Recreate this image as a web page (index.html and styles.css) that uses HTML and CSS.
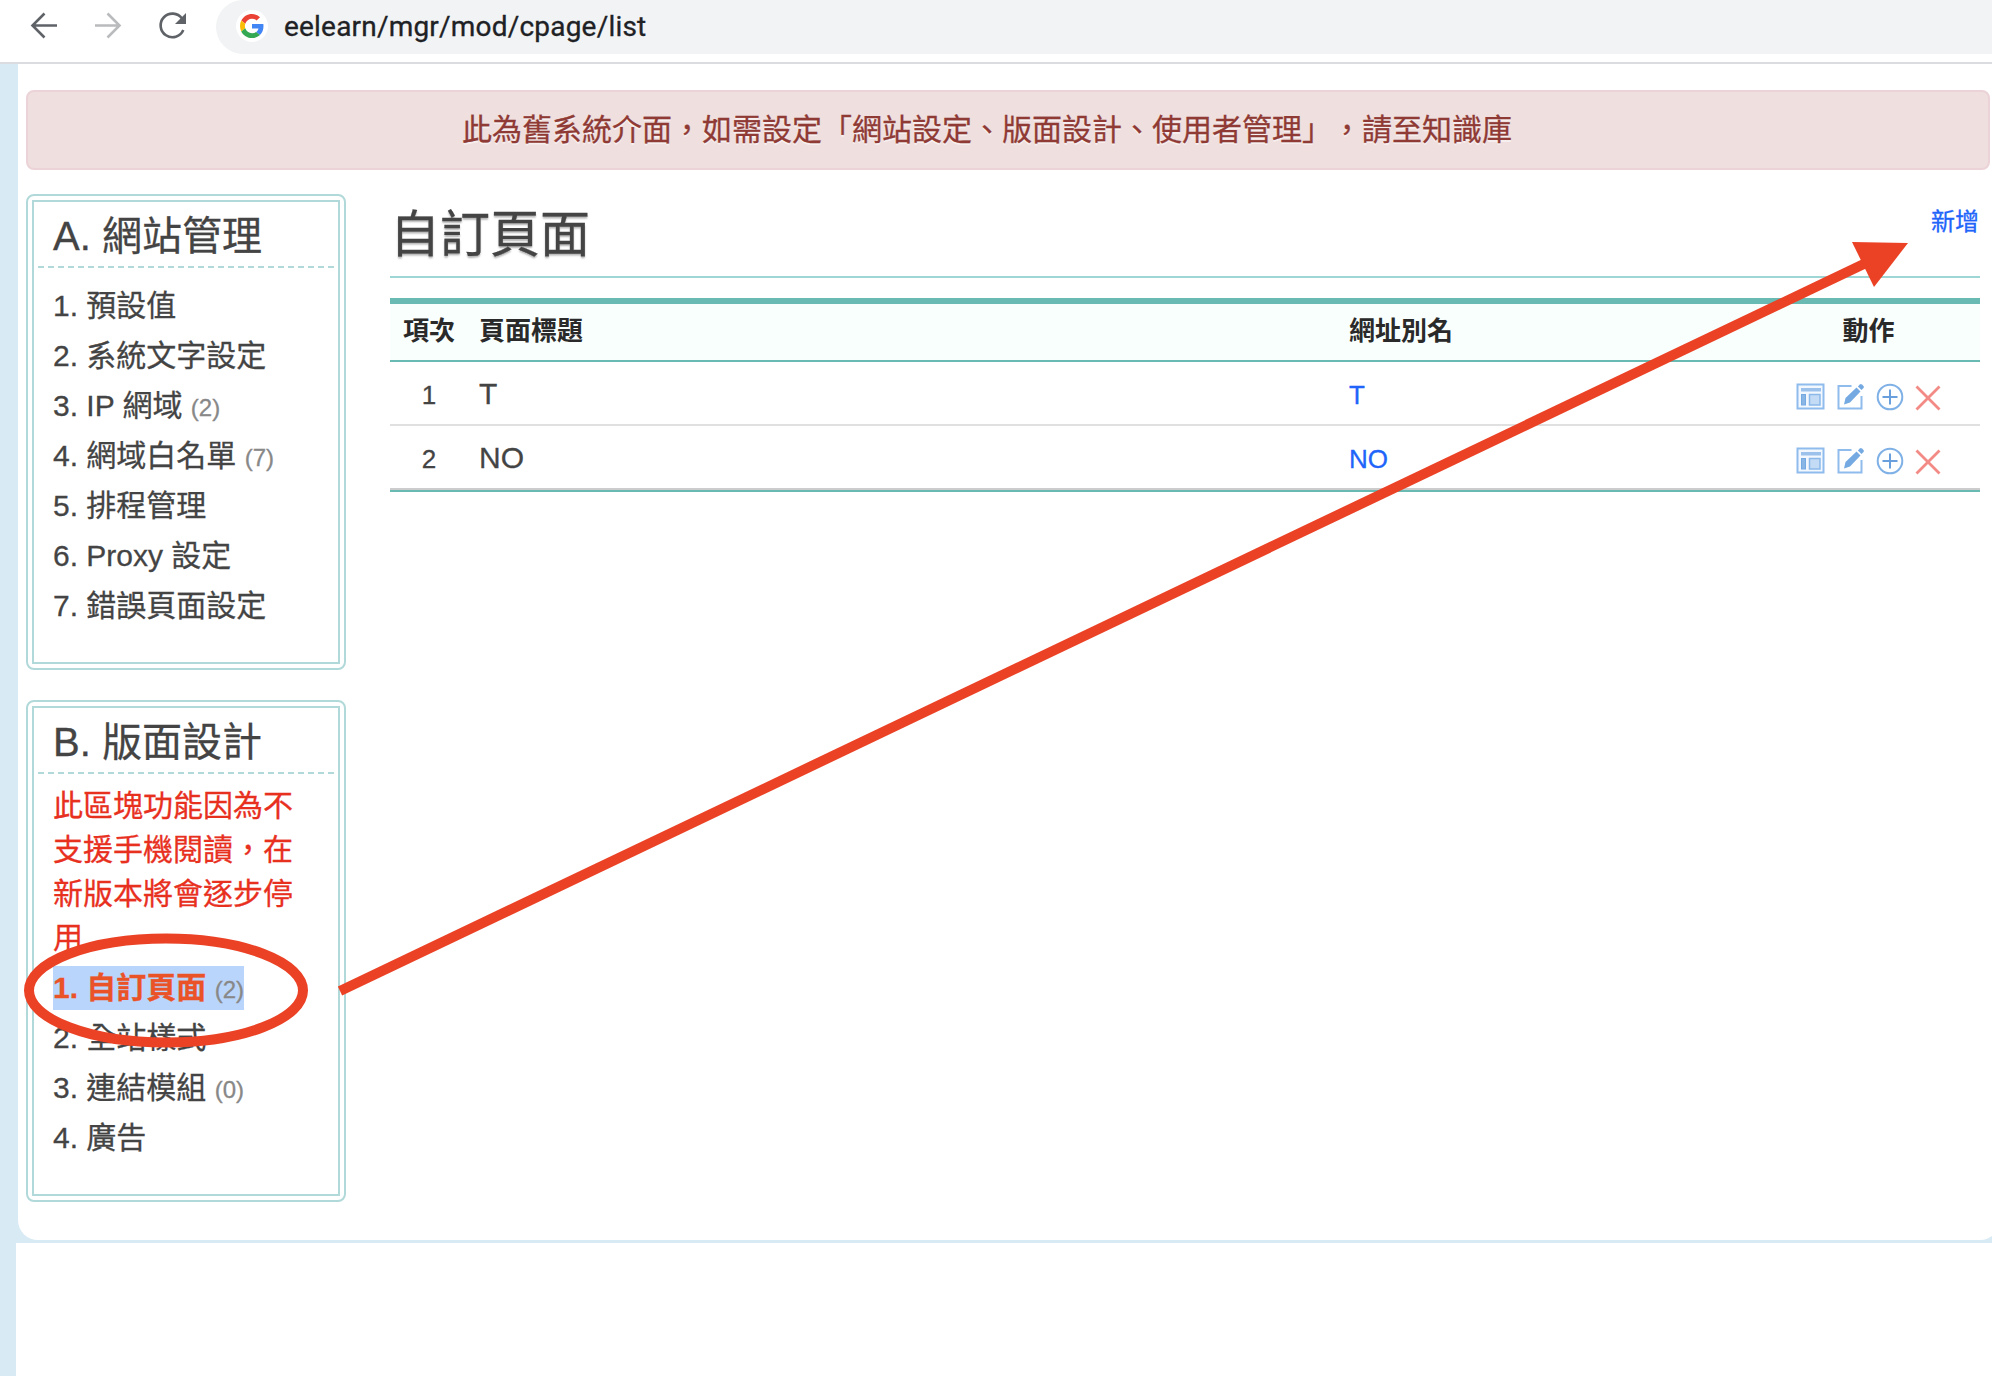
FILE: index.html
```
<!DOCTYPE html>
<html lang="zh-Hant">
<head>
  <meta charset="UTF-8" />
  <title>自訂頁面</title>
  <link rel="stylesheet" href="styles.css">
</head>
<body>
  <svg class="sprite">
    <symbol id="i-layout" viewBox="0 0 30 28">
      <rect x="1.5" y="1.5" width="26" height="24" fill="#f3f8fe" stroke="#8fbcec" stroke-width="2"/>
      <rect x="5" y="5" width="20" height="3.5" fill="#9cc2ec"/>
      <rect x="5.5" y="11.5" width="4" height="10.5" fill="#8ab6e6" stroke="#74a9e2"/>
      <rect x="13.5" y="11.5" width="10.5" height="10.5" fill="#c3dbf4" stroke="#8cb9ea" stroke-width="1.5"/>
    </symbol>
    <symbol id="i-edit" viewBox="0 0 30 28">
      <path d="M15.500 3H2.500v22.500h23V13" fill="none" stroke="#8fbcec" stroke-width="2"/>
      <path d="M8 21.500l1.500-6.500L20.500 4.500l4 4L14 19.500z" fill="#74a9e2"/>
      <path d="M21.900 3.400l2-2a1.500 1.500 0 0 1 2 0l1.600 1.600a1.500 1.500 0 0 1 0 2l-2 2z" fill="#74a9e2"/>
    </symbol>
    <symbol id="i-plus" viewBox="0 0 28 28">
      <circle cx="14" cy="14" r="12.300" fill="none" stroke="#7fb0e6" stroke-width="2"/>
      <path d="M14 6.500v15M6.500 14h15" stroke="#6a9fdd" stroke-width="2"/>
    </symbol>
    <symbol id="i-del" viewBox="0 0 26 26">
      <path d="M1.500 1.500l23 23M24.500 1.500l-23 23" stroke="#f28b85" stroke-width="2.800"/>
    </symbol>
  </svg>

  <div class="toolbar">
    <svg class="nav" viewBox="0 0 216 62">
      <g fill="none" stroke="#5f6368" stroke-width="2.600">
        <path d="M57 25.500H33M44.500 13.500l-12 12 12 12"/>
        <path d="M95 25.500h24M107.500 13.500l12 12-12 12" stroke="#b9bbbd"/>
        <path d="M182 18.500a11.800 11.800 0 1 0 1.300 11.500"/>
      </g>
      <path d="M186 13v11h-11z" fill="#5f6368"/>
    </svg>
    <div class="address">
      <div class="favicon">
        <svg viewBox="0 0 48 48" width="24" height="24">
          <path fill="#ea4335" d="M24 9.500c3.540 0 6.710 1.220 9.210 3.600l6.850-6.850C35.900 2.380 30.470 0 24 0 14.620 0 6.510 5.380 2.560 13.220l7.980 6.190C12.430 13.720 17.740 9.500 24 9.500z"/>
          <path fill="#4285f4" d="M46.980 24.550c0-1.570-.15-3.090-.38-4.550H24v9.020h12.940c-.58 2.960-2.260 5.480-4.780 7.180l7.730 6c4.510-4.180 7.090-10.360 7.090-17.650z"/>
          <path fill="#fbbc05" d="M10.530 28.590c-.48-1.450-.76-2.990-.76-4.590s.27-3.140.76-4.590l-7.980-6.190C.92 16.460 0 20.120 0 24s.92 7.540 2.560 10.780z"/>
          <path fill="#34a853" d="M24 48c6.480 0 11.930-2.130 15.890-5.810l-7.730-6c-2.150 1.450-4.920 2.300-8.160 2.300-6.260 0-11.570-4.220-13.470-9.910l-7.980 6.190C6.510 42.620 14.620 48 24 48z"/>
        </svg>
      </div>
      <span class="url">eelearn/mgr/mod/cpage/list</span>
    </div>
  </div>

  <div class="page">
    <div class="wrap">
      <div class="alert">此為舊系統介面，如需設定「網站設定、版面設計、使用者管理」，請至知識庫</div>
      <div class="cols">
        <div class="side">
          <div class="box">
            <div class="box-in">
              <h2>A. 網站管理</h2>
              <ul>
                <li>1. 預設值</li>
                <li>2. 系統文字設定</li>
                <li>3. IP 網域 <small>(2)</small></li>
                <li>4. 網域白名單 <small>(7)</small></li>
                <li>5. 排程管理</li>
                <li>6. Proxy 設定</li>
                <li>7. 錯誤頁面設定</li>
              </ul>
            </div>
          </div>
          <div class="box box-b">
            <div class="box-in">
              <h2>B. 版面設計</h2>
              <p class="warn">此區塊功能因為不支援手機閱讀，在新版本將會逐步停用</p>
              <ul>
                <li><span class="selected"><b>1. 自訂頁面</b> <small>(2)</small></span></li>
                <li>2. 全站樣式</li>
                <li>3. 連結模組 <small>(0)</small></li>
                <li>4. 廣告</li>
              </ul>
            </div>
          </div>
        </div>

        <div class="main">
          <div class="main-head">
            <h1>自訂頁面</h1>
            <a class="add">新增</a>
          </div>
          <table>
            <thead>
              <tr><th class="no">項次</th><th class="name">頁面標題</th><th class="alias">網址別名</th><th class="act">動作</th></tr>
            </thead>
            <tbody>
              <tr>
                <td class="no">1</td>
                <td class="name">T</td>
                <td class="alias"><a>T</a></td>
                <td class="act">
                  <div class="icons">
                    <svg width="30" height="28"><use href="#i-layout"/></svg>
                    <svg width="30" height="28"><use href="#i-edit"/></svg>
                    <svg width="28" height="28"><use href="#i-plus"/></svg>
                    <svg class="del" width="26" height="26"><use href="#i-del"/></svg>
                  </div>
                </td>
              </tr>
              <tr>
                <td class="no">2</td>
                <td class="name">NO</td>
                <td class="alias"><a>NO</a></td>
                <td class="act">
                  <div class="icons">
                    <svg width="30" height="28"><use href="#i-layout"/></svg>
                    <svg width="30" height="28"><use href="#i-edit"/></svg>
                    <svg width="28" height="28"><use href="#i-plus"/></svg>
                    <svg class="del" width="26" height="26"><use href="#i-del"/></svg>
                  </div>
                </td>
              </tr>
            </tbody>
          </table>
        </div>
      </div>
    </div>
  </div>
  <div class="below"></div>

  <!-- hand-drawn marks -->
  <svg class="marks" viewBox="0 0 1992 1376">
    <ellipse cx="166" cy="990.500" rx="137" ry="52" fill="none" stroke="#eb4226" stroke-width="10"/>
    <path d="M340 991L1868 262" stroke="#eb4226" stroke-width="10"/>
    <path d="M1852 242l56 1-34 44z" fill="#eb4226"/>
  </svg>
</body>
</html>
```
FILE: styles.css
```
* {
  box-sizing: border-box;
}
body {
  margin: 0;
  height: 1376px;
  font-family: "Liberation Sans", "Noto Sans CJK TC", sans-serif;
  font-size: 30px;
  color: #444;
  background: #fff;
  overflow: hidden;
  position: relative;
  -webkit-text-stroke: 0.3px;
}
h1, h2, ul, p {
  margin: 0;
  padding: 0;
  font-weight: normal;
}
.sprite {
  display: none;
}

/* browser bar */
.toolbar {
  display: flex;
  height: 64px;
  border-bottom: 2px solid #dadce0;
}
.nav {
  width: 216px;
  height: 62px;
}
.address {
  flex: 1;
  display: flex;
  align-items: center;
  height: 54px;
  padding: 0 0 2px 20px;
  background: #f1f3f4;
  border-radius: 27px 0 0 27px;
}
.favicon {
  display: flex;
  align-items: center;
  justify-content: center;
  width: 32px;
  height: 32px;
  border-radius: 50%;
  background: #fff;
}
.url {
  margin-left: 16px;
  font-family: Roboto, sans-serif;
  font-size: 28px;
  letter-spacing: 0.2px;
  color: #202124;
}

/* page */
.page {
  height: 1179px;
  padding-left: 18px;
  background: #d8eaf4;
}
.wrap {
  width: 1982px;
  height: 1176px;
  padding: 26px 10px 0 8px;
  background: #fff;
  border-radius: 0 0 20px 20px;
}
.below {
  height: 133px;
  border-left: 16px solid #d8eaf4;
}
.alert {
  height: 80px;
  padding: 16px 70px 16px 28px;
  border: 2px solid #ebd3d7;
  border-radius: 8px;
  background: #efdfdf;
  color: #8f3a34;
  line-height: 44px;
  text-align: center;
  text-shadow: 0 2px 0 rgba(255, 255, 255, 0.5);
  text-spacing-trim: space-all;
  white-space: nowrap;
}
.cols {
  display: flex;
  gap: 44px;
  margin-top: 24px;
}
.side {
  width: 320px;
}
.box {
  height: 476px;
  padding: 4px;
  border: 2px solid #b2d9d9;
  border-radius: 8px;
}
.box-b {
  height: 502px;
  margin-top: 30px;
}
.box-in {
  height: 100%;
  padding: 4px;
  border: 2px solid #b2d9d9;
}
.box h2 {
  height: 62px;
  padding-left: 15px;
  font-size: 40px;
  line-height: 60px;
  background: repeating-linear-gradient(90deg, #b2d9d9 0 6px, transparent 6px 10px) bottom / 100% 2px no-repeat;
}
.box ul {
  margin-top: 13px;
  padding-left: 15px;
  list-style: none;
}
.box-b ul {
  margin-top: 3px;
}
.box li {
  height: 50px;
  line-height: 50px;
  white-space: nowrap;
}
small {
  font-size: 24px;
  color: #888;
}
.warn {
  margin: 10px 35px 0 15px;
  color: #e8301f;
  line-height: 44px;
}
.selected {
  display: inline-block;
  height: 44px;
  line-height: 44px;
  background: #bad5fb;
}
.selected b {
  color: #ea5328;
}

.main {
  width: 1590px;
}
.main-head {
  display: flex;
  justify-content: space-between;
  height: 84px;
  border-bottom: 2px solid #9ed5d5;
}
h1 {
  font-size: 50px;
  line-height: 83px;
  text-shadow: 0 2px 2px rgba(0, 0, 0, 0.3);
}
.add {
  padding-right: 1px;
  font-size: 24px;
  line-height: 56px;
}
a {
  color: #2064fa;
}

table {
  width: 100%;
  margin-top: 20px;
  table-layout: fixed;
  border-spacing: 0;
  border-top: 6px solid #69bab3;
  border-bottom: 2px solid #69bab3;
}
th, td {
  padding: 0 10px;
  text-align: left;
}
th {
  height: 58px;
  padding-bottom: 2px;
  font-size: 26px;
  line-height: 54px;
  color: #2a2a2a;
  background: #f9fffd;
  border-bottom: 2px solid #69bab3;
  -webkit-text-stroke: 0;
}
td {
  height: 64px;
  padding-top: 2px;
  line-height: 60px;
  border-bottom: 2px solid #e0e0e0;
}
tr:last-child td {
  border-bottom-color: #ccc;
}
.no {
  width: 78px;
  text-align: center;
  font-size: 26px;
}
.name {
  padding-left: 11px;
}
.alias {
  width: 421px;
  font-size: 26px;
}
td.no, td.alias {
  padding-top: 4px;
  line-height: 58px;
}
.act {
  width: 220px;
  padding-right: 13px;
  text-align: center;
}
.icons {
  display: flex;
  justify-content: center;
  gap: 10px;
  padding-top: 6px;
  align-items: center;
}
.icons svg {
  display: block;
}
.icons .del {
  margin: 2px 0 0 1px;
}

.marks {
  position: absolute;
  left: 0;
  top: 0;
  width: 1992px;
  height: 1376px;
}
```
